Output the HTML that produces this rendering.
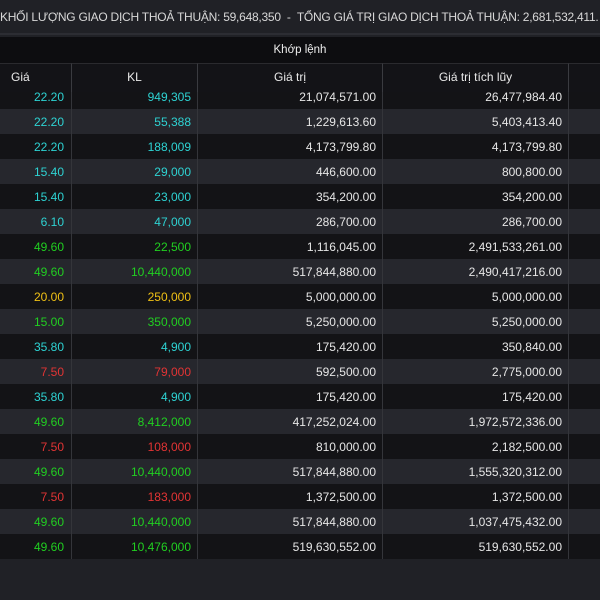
<!DOCTYPE html>
<html><head><meta charset="utf-8"><style>
*{margin:0;padding:0;box-sizing:border-box}
body{width:600px;height:600px;background:#202126;font-family:"Liberation Sans",sans-serif;font-size:12px;color:#e6e6e6;overflow:hidden;position:relative}
.top{position:absolute;left:0;top:0;width:600px;height:35px;line-height:34px;white-space:nowrap;overflow:hidden;font-size:12px;letter-spacing:-0.25px;color:#d8d8d8;background:#202126;border-bottom:2px solid #2c2d33}
.khop{position:absolute;left:0;top:37px;width:600px;height:26px;background:#0d0d10;text-align:center;line-height:27px;color:#eee;font-size:11.5px}
.hd{position:absolute;top:63px;height:29px;background:#131317;line-height:27px;text-align:center;color:#eaeaea;border-left:1px solid #3a3b40;border-top:1px solid #2a2a2e}
.row{position:absolute;left:0;width:600px;height:25px}
.row div{position:absolute;top:0;height:25px;line-height:26px;text-align:right;border-left:1px solid #34353a}
.c1{left:0;width:71px;padding-right:7px;border-left:none!important}
.c2{left:71px;width:126px;padding-right:6px}
.c3{left:197px;width:185px;padding-right:6px}
.c4{left:382px;width:186px;padding-right:6px}
.c5{left:568px;width:32px}
.d{background:#131316}.l{background:#26272d}
.cy{color:#2ed3d3}.g{color:#21cf21}.y{color:#efc015}.r{color:#e23434}
</style></head><body>
<div class="top">KHỐI LƯỢNG GIAO DỊCH THOẢ THUẬN: 59,648,350 &nbsp;- &nbsp;TỔNG GIÁ TRỊ GIAO DỊCH THOẢ THUẬN: 2,681,532,411.</div>
<div class="row d" style="top:84px"><div class="c1 cy">22.20</div><div class="c2 cy">949,305</div><div class="c3">21,074,571.00</div><div class="c4">26,477,984.40</div><div class="c5"></div></div>
<div class="row l" style="top:109px"><div class="c1 cy">22.20</div><div class="c2 cy">55,388</div><div class="c3">1,229,613.60</div><div class="c4">5,403,413.40</div><div class="c5"></div></div>
<div class="row d" style="top:134px"><div class="c1 cy">22.20</div><div class="c2 cy">188,009</div><div class="c3">4,173,799.80</div><div class="c4">4,173,799.80</div><div class="c5"></div></div>
<div class="row l" style="top:159px"><div class="c1 cy">15.40</div><div class="c2 cy">29,000</div><div class="c3">446,600.00</div><div class="c4">800,800.00</div><div class="c5"></div></div>
<div class="row d" style="top:184px"><div class="c1 cy">15.40</div><div class="c2 cy">23,000</div><div class="c3">354,200.00</div><div class="c4">354,200.00</div><div class="c5"></div></div>
<div class="row l" style="top:209px"><div class="c1 cy">6.10</div><div class="c2 cy">47,000</div><div class="c3">286,700.00</div><div class="c4">286,700.00</div><div class="c5"></div></div>
<div class="row d" style="top:234px"><div class="c1 g">49.60</div><div class="c2 g">22,500</div><div class="c3">1,116,045.00</div><div class="c4">2,491,533,261.00</div><div class="c5"></div></div>
<div class="row l" style="top:259px"><div class="c1 g">49.60</div><div class="c2 g">10,440,000</div><div class="c3">517,844,880.00</div><div class="c4">2,490,417,216.00</div><div class="c5"></div></div>
<div class="row d" style="top:284px"><div class="c1 y">20.00</div><div class="c2 y">250,000</div><div class="c3">5,000,000.00</div><div class="c4">5,000,000.00</div><div class="c5"></div></div>
<div class="row l" style="top:309px"><div class="c1 g">15.00</div><div class="c2 g">350,000</div><div class="c3">5,250,000.00</div><div class="c4">5,250,000.00</div><div class="c5"></div></div>
<div class="row d" style="top:334px"><div class="c1 cy">35.80</div><div class="c2 cy">4,900</div><div class="c3">175,420.00</div><div class="c4">350,840.00</div><div class="c5"></div></div>
<div class="row l" style="top:359px"><div class="c1 r">7.50</div><div class="c2 r">79,000</div><div class="c3">592,500.00</div><div class="c4">2,775,000.00</div><div class="c5"></div></div>
<div class="row d" style="top:384px"><div class="c1 cy">35.80</div><div class="c2 cy">4,900</div><div class="c3">175,420.00</div><div class="c4">175,420.00</div><div class="c5"></div></div>
<div class="row l" style="top:409px"><div class="c1 g">49.60</div><div class="c2 g">8,412,000</div><div class="c3">417,252,024.00</div><div class="c4">1,972,572,336.00</div><div class="c5"></div></div>
<div class="row d" style="top:434px"><div class="c1 r">7.50</div><div class="c2 r">108,000</div><div class="c3">810,000.00</div><div class="c4">2,182,500.00</div><div class="c5"></div></div>
<div class="row l" style="top:459px"><div class="c1 g">49.60</div><div class="c2 g">10,440,000</div><div class="c3">517,844,880.00</div><div class="c4">1,555,320,312.00</div><div class="c5"></div></div>
<div class="row d" style="top:484px"><div class="c1 r">7.50</div><div class="c2 r">183,000</div><div class="c3">1,372,500.00</div><div class="c4">1,372,500.00</div><div class="c5"></div></div>
<div class="row l" style="top:509px"><div class="c1 g">49.60</div><div class="c2 g">10,440,000</div><div class="c3">517,844,880.00</div><div class="c4">1,037,475,432.00</div><div class="c5"></div></div>
<div class="row d" style="top:534px"><div class="c1 g">49.60</div><div class="c2 g">10,476,000</div><div class="c3">519,630,552.00</div><div class="c4">519,630,552.00</div><div class="c5"></div></div>
<div class="hd" style="left:0;width:71px;border-left:none;text-align:left;padding-left:11px">Giá</div>
<div class="hd" style="left:71px;width:126px">KL</div>
<div class="hd" style="left:197px;width:185px">Giá trị</div>
<div class="hd" style="left:382px;width:186px">Giá trị tích lũy</div>
<div class="hd" style="left:568px;width:32px"></div>
<div class="khop">Khớp lệnh</div>
</body></html>
